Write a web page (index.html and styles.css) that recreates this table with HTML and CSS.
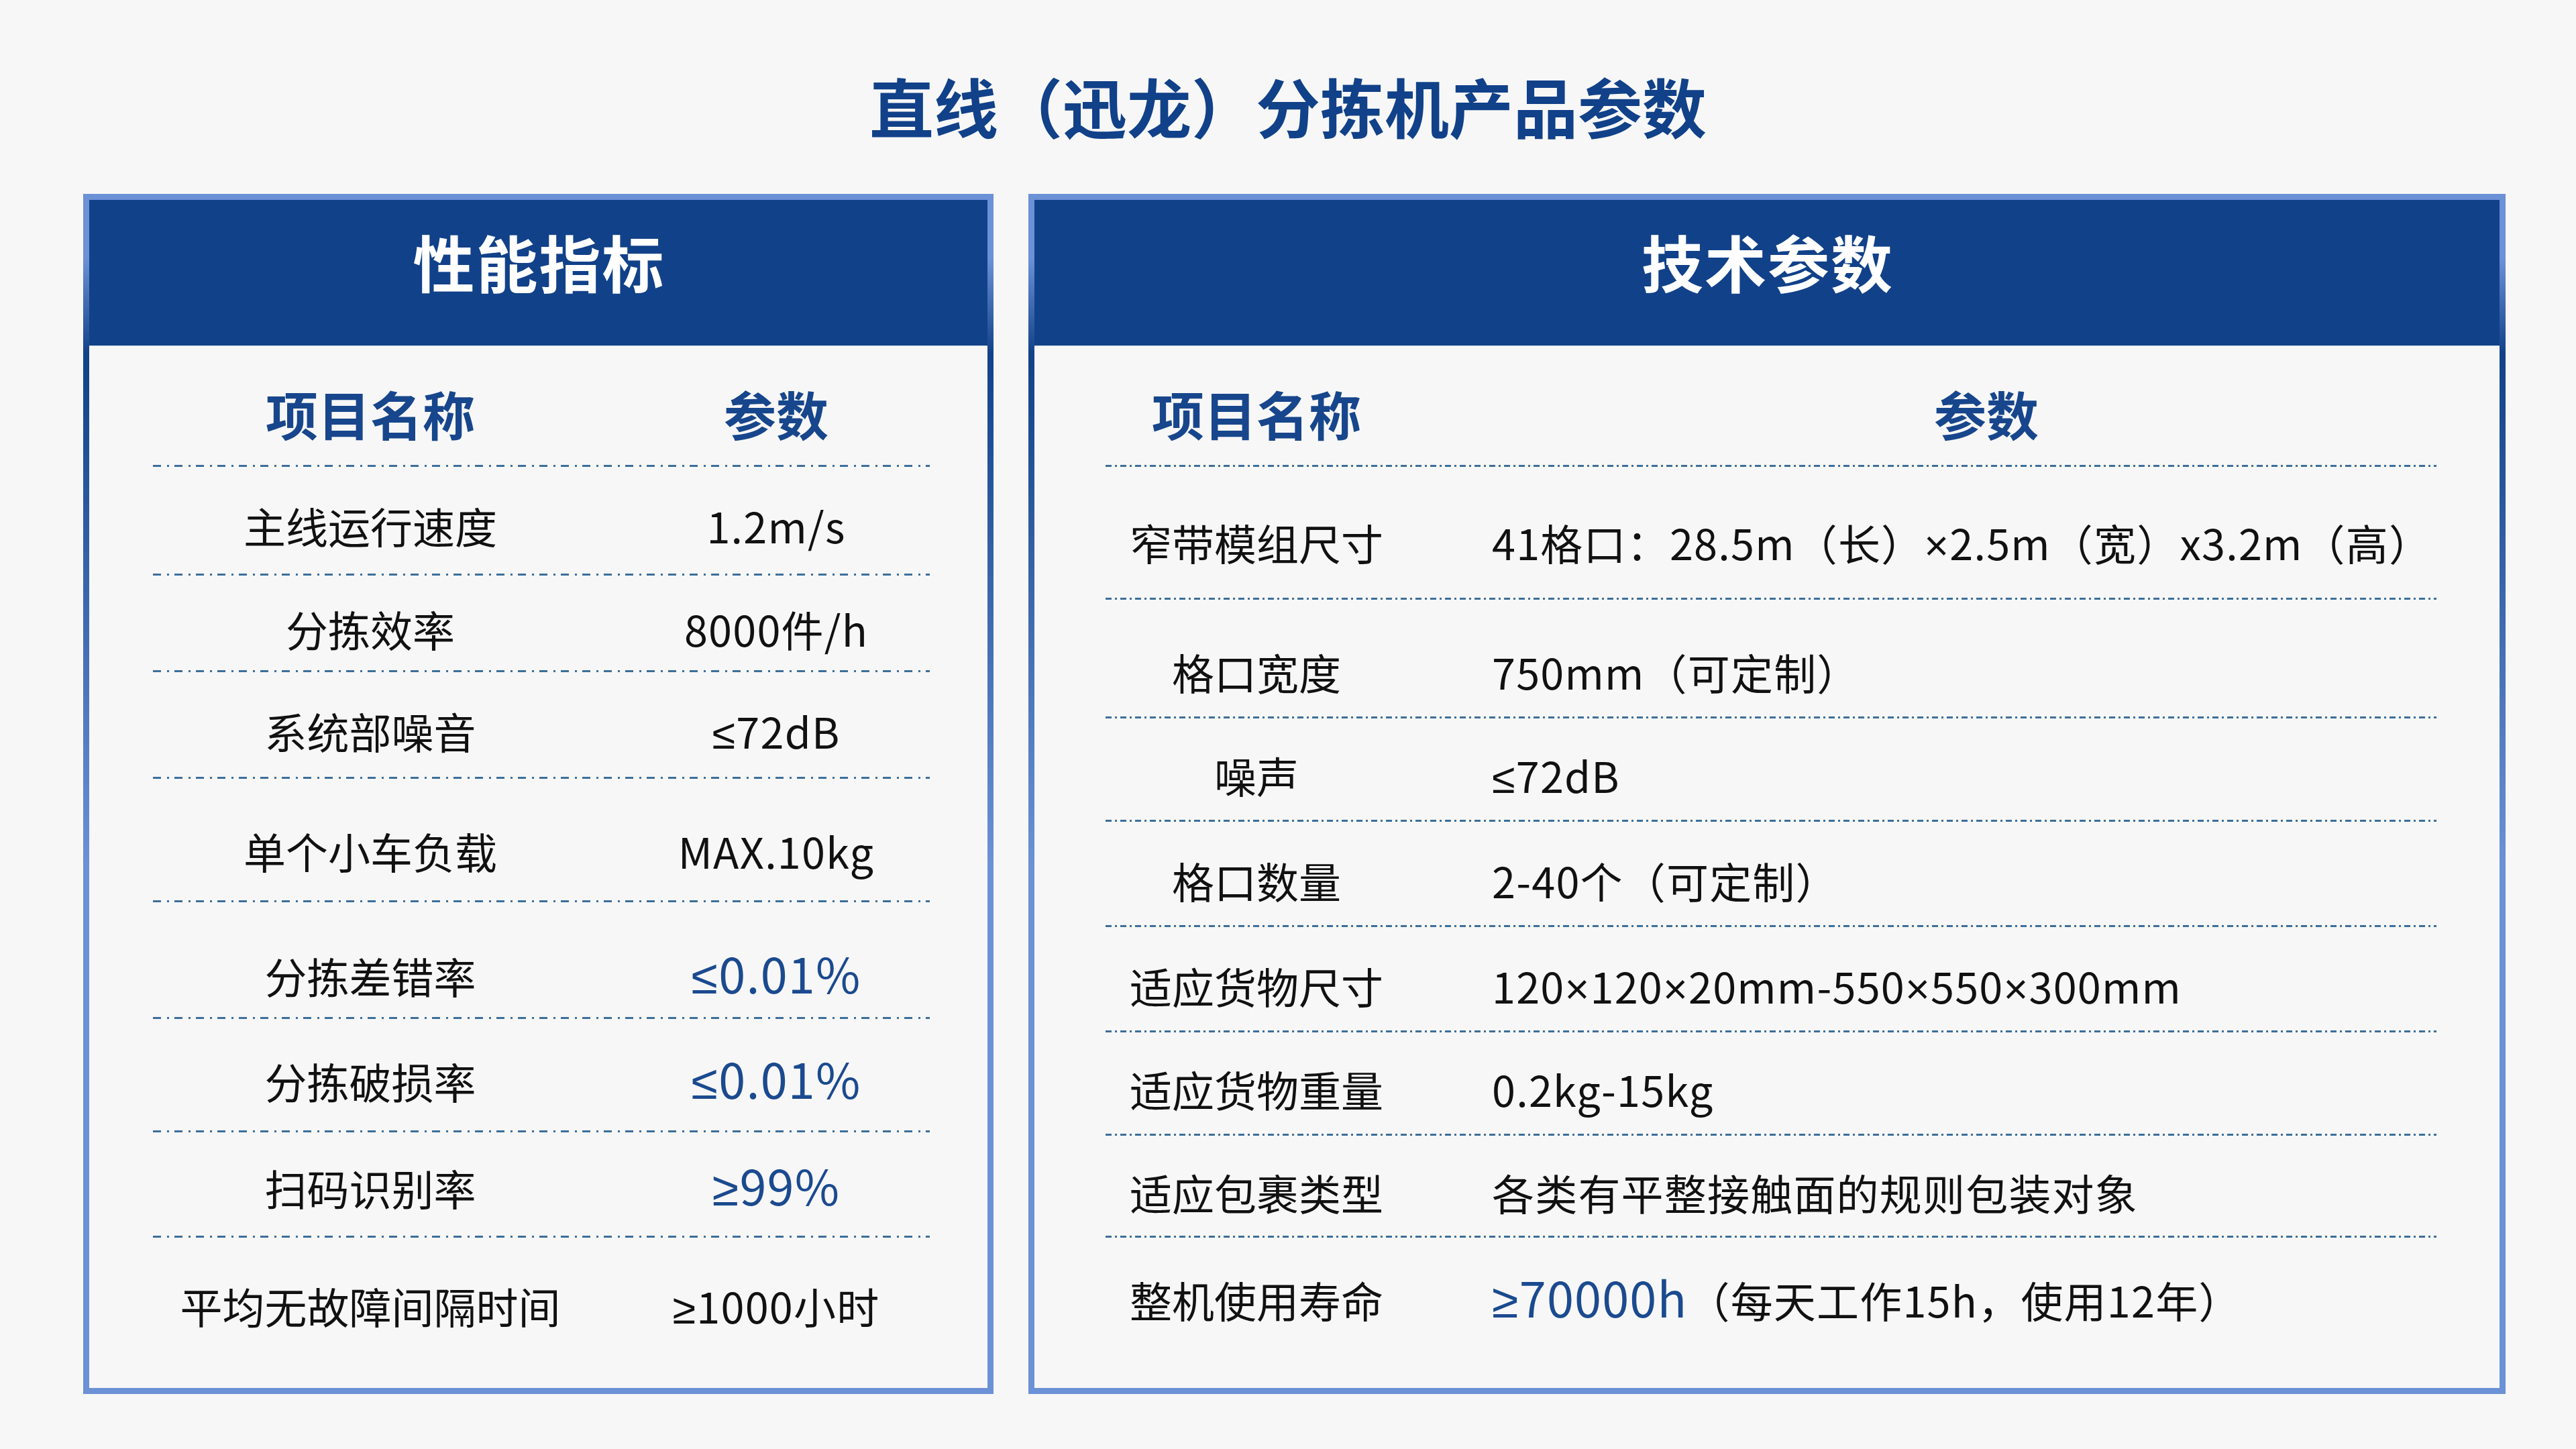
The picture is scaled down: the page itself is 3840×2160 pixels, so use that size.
FILE: index.html
```html
<!DOCTYPE html>
<html lang="zh-CN">
<head>
<meta charset="utf-8">
<title>直线（迅龙）分拣机产品参数</title>
<link rel="stylesheet" href="styles.css">
</head>
<body>
<h1 class="title">直线（迅龙）分拣机产品参数</h1>
<main class="panels">
  <section class="panel perf">
    <div class="panel-head">性能指标</div>
    <div class="panel-body">
      <div class="thead"><span class="c1">项目名称</span><span class="c2">参数</span></div>
      <div class="row"><span class="c1">主线运行速度</span><span class="c2">1.2m/s</span></div>
      <div class="row"><span class="c1">分拣效率</span><span class="c2">8000件/h</span></div>
      <div class="row"><span class="c1">系统部噪音</span><span class="c2"><span class="sym">≤</span>72dB</span></div>
      <div class="row"><span class="c1">单个小车负载</span><span class="c2">MAX.10kg</span></div>
      <div class="row"><span class="c1">分拣差错率</span><span class="c2"><span class="hl"><span class="sym">≤</span>0.01%</span></span></div>
      <div class="row"><span class="c1">分拣破损率</span><span class="c2"><span class="hl"><span class="sym">≤</span>0.01%</span></span></div>
      <div class="row"><span class="c1">扫码识别率</span><span class="c2"><span class="hl"><span class="sym">≥</span>99%</span></span></div>
      <div class="row"><span class="c1">平均无故障间隔时间</span><span class="c2"><span class="sym">≥</span>1000小时</span></div>
    </div>
  </section>
  <section class="panel tech">
    <div class="panel-head">技术参数</div>
    <div class="panel-body">
      <div class="thead"><span class="c1">项目名称</span><span class="c2">参数</span></div>
      <div class="row"><span class="c1">窄带模组尺寸</span><span class="c2">41格口：28.5m（长）<span class="sym">×</span>2.5m（宽）x3.2m（高）</span></div>
      <div class="row"><span class="c1">格口宽度</span><span class="c2">750mm（可定制）</span></div>
      <div class="row"><span class="c1">噪声</span><span class="c2"><span class="sym">≤</span>72dB</span></div>
      <div class="row"><span class="c1">格口数量</span><span class="c2">2-40个（可定制）</span></div>
      <div class="row"><span class="c1">适应货物尺寸</span><span class="c2">120<span class="sym">×</span>120<span class="sym">×</span>20mm-550<span class="sym">×</span>550<span class="sym">×</span>300mm</span></div>
      <div class="row"><span class="c1">适应货物重量</span><span class="c2">0.2kg-15kg</span></div>
      <div class="row"><span class="c1">适应包裹类型</span><span class="c2">各类有平整接触面的规则包装对象</span></div>
      <div class="row"><span class="c1">整机使用寿命</span><span class="c2"><span class="hl"><span class="sym">≥</span>70000h</span>（每天工作15h，使用12年）</span></div>
    </div>
  </section>
</main>
</body>
</html>
```
FILE: styles.css
```css
* { box-sizing: border-box; }

body {
  margin: 0;
  width: 3840px;
  height: 2160px;
  background: #f7f7f7;
  font-family: "Noto Sans CJK SC", "Noto Sans", sans-serif;
  color: #111;
  overflow: hidden;
}

.title {
  margin: 0;
  padding-top: 109px;
  height: 205px;
  font-size: 96px;
  line-height: 96px;
  font-weight: 700;
  color: #114189;
  text-align: center;
}

.panels {
  display: flex;
  gap: 52px;
  margin-top: 84px;
  padding: 0 105px 0 124px;
  height: 1789px;
}

.panel {
  display: flex;
  flex-direction: column;
  border: 9px solid #6b91d6;
  border-image: linear-gradient(to bottom,
    #6b91d6 0%, #6b91d6 5%, #114189 13%, #1a4a92 18%, #6b91d6 56%, #6b91d6 100%) 1;
  background: #f7f7f7;
}

.perf { width: 1357px; }
.tech { width: 2202px; }

.panel-head {
  height: 218px;
  padding-top: 41px;
  background: #114189;
  border-bottom: 1px solid #cbd8ee;
  color: #fff;
  font-size: 92px;
  line-height: 100px;
  font-weight: 700;
  letter-spacing: 2px;
  text-indent: 2px;
  text-align: center;
}

.panel-body {
  flex: 1;
  display: flex;
  flex-direction: column;
}

.perf .panel-body { padding: 0 86px 0 95px; }
.tech .panel-body { padding: 0 94px 0 106px; }

.thead {
  display: grid;
  height: 177px;
  padding-top: 50px;
  font-size: 78px;
  line-height: 100px;
  font-weight: 700;
  color: #17468c;
}

.row {
  display: grid;
  font-size: 63px;
  line-height: 80px;
  white-space: nowrap;
  background-repeat: repeat-x;
  background-position: 0 0;
}

.row .c2 { letter-spacing: 1.2px; }

.sym {
  font-family: "Liberation Sans", "DejaVu Sans", sans-serif;
}

.perf .thead, .perf .row { grid-template-columns: 648px 1fr; }
.perf .c1 { text-align: center; }
.perf .c2 { text-align: center; padding-left: 52px; }

.tech .thead, .tech .row { grid-template-columns: 450px 1fr; }
.tech .c1 { text-align: center; }
.tech .row .c2 { text-align: left; padding-left: 126px; }
.tech .thead .c2 { text-align: center; padding-left: 192px; }

.perf .row {
  background-image: linear-gradient(to right,
    #3c6f9b 0 12px, transparent 12px 21px, #3c6f9b 21px 24px, transparent 24px 32px);
  background-size: 32px 3px;
}

.tech .row {
  background-image: linear-gradient(to right,
    #3c6f9b 0 9px, transparent 9px 14px, #3c6f9b 14px 17px, transparent 17px 22px);
  background-size: 22px 3px;
}

.hl {
  color: #1b4a8f;
  font-size: 72px;
  line-height: 0;
}

/* 性能指标 row geometry */
.perf .row:nth-child(2) { height: 162px; padding-top: 50px; }
.perf .row:nth-child(3) { height: 144px; padding-top: 42px; }
.perf .row:nth-child(4) { height: 159px; padding-top: 50px; }
.perf .row:nth-child(5) { height: 184px; padding-top: 70px; }
.perf .row:nth-child(6) { height: 174px; padding-top: 72px; }
.perf .row:nth-child(7) { height: 169px; padding-top: 55px; }
.perf .row:nth-child(8) { height: 157px; padding-top: 45px; }
.perf .row:nth-child(9) { height: 227px; padding-top: 64px; }

/* 技术参数 row geometry */
.tech .row:nth-child(2) { height: 198px; padding-top: 75px; }
.tech .row:nth-child(3) { height: 177px; padding-top: 70px; }
.tech .row:nth-child(4) { height: 154px; padding-top: 47px; }
.tech .row:nth-child(5) { height: 157px; padding-top: 50px; }
.tech .row:nth-child(6) { height: 157px; padding-top: 50px; }
.tech .row:nth-child(7) { height: 154px; padding-top: 47px; }
.tech .row:nth-child(8) { height: 152px; padding-top: 47px; }
.tech .row:nth-child(9) { height: 227px; padding-top: 55px; }
```
